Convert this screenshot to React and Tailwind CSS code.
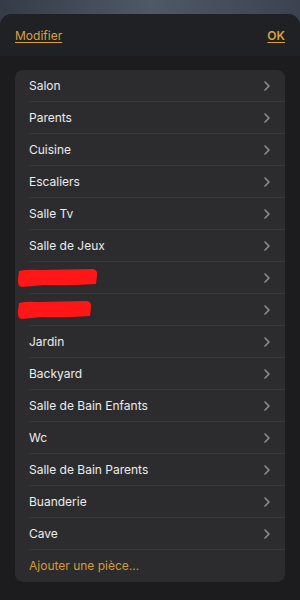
const rooms = [
  'Salon',
  'Parents',
  'Cuisine',
  'Escaliers',
  'Salle Tv',
  'Salle de Jeux',
  null,
  null,
  'Jardin',
  'Backyard',
  'Salle de Bain Enfants',
  'Wc',
  'Salle de Bain Parents',
  'Buanderie',
  'Cave',
];

function Chevron() {
  return (
    <svg width="8" height="12" viewBox="0 0 8 12" className="text-[#8e8e93]">
      <path d="M2 2 6 6l-4 4" fill="none" stroke="currentColor" strokeWidth="1.6" strokeLinecap="round" strokeLinejoin="round" />
    </svg>
  );
}

function Redacted({ width }) {
  return (
    <svg width={width + 4} height="22" viewBox={`0 0 ${width + 4} 22`} className="-ml-[13px]">
      <path
        d={`M3 4 Q10 2 ${width * 0.3} 3 L${width - 3} 2 Q${width + 2} 3 ${width + 1} 9 L${width} 17 Q${width * 0.6} 19 ${width * 0.35} 18 L6 20 Q1 19 2 12 Z`}
        fill="#ff1616"
      />
    </svg>
  );
}

export default function App() {
  return (
    <div className="h-[600px] w-[300px] overflow-hidden bg-gradient-to-r from-[#353c48] via-[#4f5866] to-[#3c4350] font-['Inter','Liberation_Sans',sans-serif]">
      <div className="mt-[14px] flex h-[586px] flex-col rounded-t-[12px] bg-[#1c1c1e]">
        <div className="flex h-[42px] items-center justify-between rounded-t-[12px] bg-[#202124] px-[15px] pt-[1px] text-[12px] text-[#dba23c]">
          <span className="underline underline-offset-2">Modifier</span>
          <span className="font-semibold underline underline-offset-2">OK</span>
        </div>
        <div className="px-[15px] pt-[14px]">
          <div className="overflow-hidden rounded-[8px] bg-[#2c2c2e]">
            {rooms.map((room, i) => (
              <div key={i} className="flex h-[32px] items-center pl-[14px]">
                <div className="flex h-full flex-1 items-center justify-between border-b border-[#38383a] pr-[14px]">
                  {room ? (
                    <span className="text-[12px] text-[#ececec]">{room}</span>
                  ) : (
                    <Redacted width={i === 6 ? 80 : 74} />
                  )}
                  <Chevron />
                </div>
              </div>
            ))}
            <div className="flex h-[32px] items-center pl-[14px] text-[12px] text-[#d49a36]">Ajouter une pièce...</div>
          </div>
        </div>
      </div>
    </div>
  );
}
